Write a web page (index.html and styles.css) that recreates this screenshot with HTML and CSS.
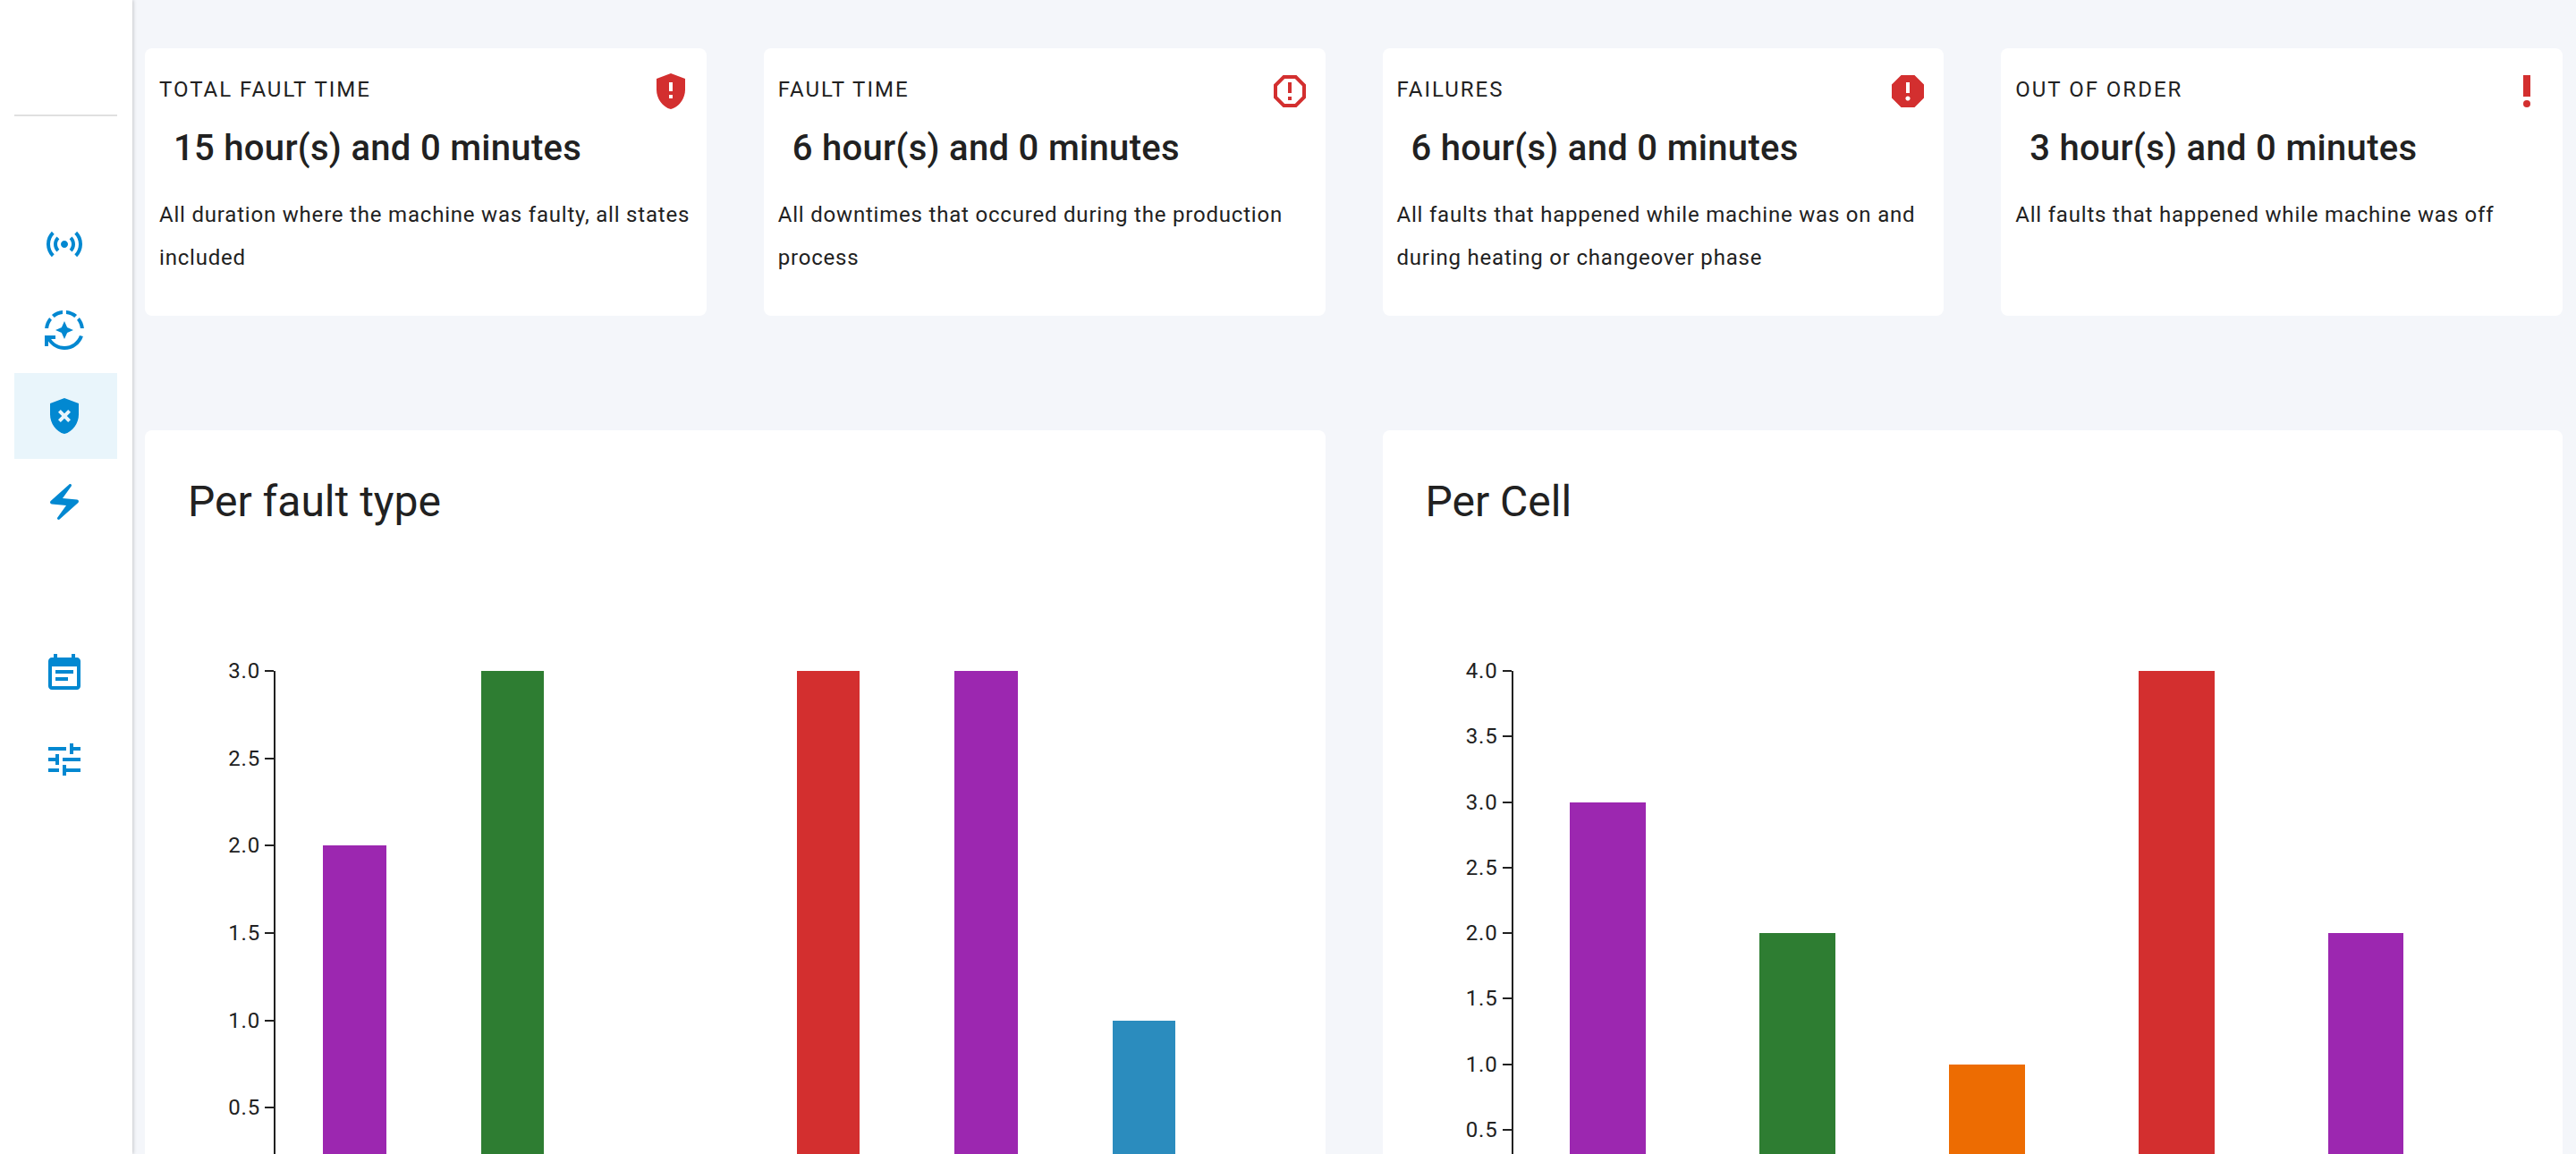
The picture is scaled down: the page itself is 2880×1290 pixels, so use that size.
FILE: index.html
```html
<!DOCTYPE html>
<html lang="en">
<head>
<meta charset="utf-8">
<meta name="viewport" content="width=device-width, initial-scale=1">
<title>Machine faults</title>
<link rel="stylesheet" href="styles.css">
</head>
<body>
<div class="app">
  <nav class="sidebar" aria-label="Main">
    <hr class="divider">
    <div class="nav-group">
      <a class="nav-item" href="#live" aria-label="Live"><svg class="icon" viewBox="0 0 24 24"><path d="M7.76 16.24C6.67 15.16 6 13.66 6 12s.67-3.16 1.76-4.24l1.42 1.42C8.45 9.9 8 10.9 8 12c0 1.1.45 2.1 1.17 2.83l-1.41 1.41zm8.48 0C17.33 15.16 18 13.66 18 12s-.67-3.16-1.76-4.24l-1.42 1.42C15.55 9.9 16 10.9 16 12c0 1.1-.45 2.1-1.17 2.83l1.41 1.41zM12 10c-1.1 0-2 .9-2 2s.9 2 2 2 2-.9 2-2-.9-2-2-2zm8 2c0 2.21-.9 4.21-2.35 5.65l1.42 1.42C20.88 17.26 22 14.76 22 12s-1.12-5.26-2.93-7.07l-1.42 1.42C19.1 7.79 20 9.79 20 12zM6.35 6.35 4.93 4.93C3.12 6.74 2 9.24 2 12s1.12 5.26 2.93 7.07l1.42-1.42C4.9 16.21 4 14.21 4 12s.9-4.21 2.35-5.65z"/></svg></a>
      <a class="nav-item" href="#cycles" aria-label="Cycles"><svg class="icon" viewBox="0 0 24 24"><path d="M19.03 3.56c-1.67-1.39-3.74-2.3-6.03-2.51v2.01c1.73.19 3.31.88 4.61 1.92l1.42-1.42zM11 3.06V1.05c-2.29.2-4.36 1.12-6.03 2.51l1.42 1.42C7.69 3.94 9.27 3.25 11 3.06zM4.98 6.39 3.56 4.97C2.17 6.64 1.26 8.71 1.05 11h2.01c.19-1.73.88-3.31 1.92-4.61zM20.94 11h2.01c-.21-2.29-1.12-4.36-2.51-6.03l-1.42 1.42c1.04 1.3 1.73 2.88 1.92 4.61zM7 12l3.44 1.56L12 17l1.56-3.44L17 12l-3.44-1.56L12 7l-1.56 3.44z"/><path d="M12 21c-3.11 0-5.85-1.59-7.46-4H7v-2H1v6h2v-2.7c1.99 2.84 5.27 4.7 9 4.7 4.87 0 9-3.17 10.44-7.56l-1.96-.45C19.25 18.48 15.92 21 12 21z"/></svg></a>
      <a class="nav-item active" href="#faults" aria-label="Faults" aria-current="page"><svg class="icon" viewBox="0 0 24 24"><path d="M12 2 4 5v6.09c0 5.05 3.41 9.76 8 10.91 4.59-1.15 8-5.86 8-10.91V5l-8-3zm3.5 12.09-1.41 1.41L12 13.42 9.91 15.5 8.5 14.09 10.59 12 8.5 9.91 9.91 8.5 12 10.59l2.09-2.09 1.41 1.41L13.42 12l2.08 2.09z"/></svg></a>
      <a class="nav-item" href="#energy" aria-label="Energy"><svg class="icon" viewBox="0 0 24 24"><path d="M14.69 2.21 4.33 11.49c-.64.58-.28 1.65.58 1.73L13 14l-4.85 6.76c-.22.31-.19.74.08 1.01.3.3.77.31 1.08.02l10.36-9.28c.64-.58.28-1.65-.58-1.73L11 10l4.85-6.76c.22-.31.19-.74-.08-1.01-.3-.3-.77-.31-1.08-.02z"/></svg></a>
    </div>
    <div class="nav-group">
      <a class="nav-item" href="#planning" aria-label="Planning"><svg class="icon" viewBox="0 0 24 24"><path d="M17 10H7v2h10v-2zm2-7h-1V1h-2v2H8V1H6v2H5c-1.11 0-1.99.9-1.99 2L3 19c0 1.1.89 2 2 2h14c1.1 0 2-.9 2-2V5c0-1.1-.9-2-2-2zm0 16H5V8h14v11zm-5-5H7v2h7v-2z"/></svg></a>
      <a class="nav-item" href="#settings" aria-label="Settings"><svg class="icon" viewBox="0 0 24 24"><path d="M3 17v2h6v-2H3zM3 5v2h10V5H3zm10 16v-2h8v-2h-8v-2h-2v6h2zM7 9v2H3v2h4v2h2V9H7zm14 4v-2H11v2h10zm-6-4h2V7h4V5h-4V3h-2v6z"/></svg></a>
    </div>
  </nav>

  <main class="content">
    <section class="stats">
      <article class="stat">
        <header class="stat-head">
          <h2 class="stat-title">TOTAL FAULT TIME</h2>
          <svg class="icon alert" viewBox="0 0 24 24"><path d="M12 2 4 5v6.09c0 5.05 3.41 9.76 8 10.91 4.59-1.15 8-5.86 8-10.91V5l-8-3zm1 14h-2v-2h2v2zm0-4h-2V7h2v5z"/></svg>
        </header>
        <p class="stat-value">15 hour(s) and 0 minutes</p>
        <p class="stat-text">All duration where the machine was faulty, all states included</p>
      </article>
      <article class="stat">
        <header class="stat-head">
          <h2 class="stat-title">FAULT TIME</h2>
          <svg class="icon alert" viewBox="0 0 24 24"><path d="M15.73 3H8.27L3 8.27v7.46L8.27 21h7.46L21 15.73V8.27L15.73 3zM19 14.9 14.9 19H9.1L5 14.9V9.1L9.1 5h5.8L19 9.1v5.8zM11 7h2v6h-2zM11 15h2v2h-2z"/></svg>
        </header>
        <p class="stat-value">6 hour(s) and 0 minutes</p>
        <p class="stat-text">All downtimes that occured during the production process</p>
      </article>
      <article class="stat">
        <header class="stat-head">
          <h2 class="stat-title">FAILURES</h2>
          <svg class="icon alert" viewBox="0 0 24 24"><path d="M15.73 3H8.27L3 8.27v7.46L8.27 21h7.46L21 15.73V8.27L15.73 3zM12 17.3c-.72 0-1.3-.58-1.3-1.3 0-.72.58-1.3 1.3-1.3.72 0 1.3.58 1.3 1.3 0 .72-.58 1.3-1.3 1.3zm1-4.3h-2V7h2v6z"/></svg>
        </header>
        <p class="stat-value">6 hour(s) and 0 minutes</p>
        <p class="stat-text">All faults that happened while machine was on and during heating or changeover phase</p>
      </article>
      <article class="stat">
        <header class="stat-head">
          <h2 class="stat-title">OUT OF ORDER</h2>
          <svg class="icon alert" viewBox="0 0 24 24"><circle cx="12" cy="19" r="2"/><path d="M10 3h4v12h-4z"/></svg>
        </header>
        <p class="stat-value">3 hour(s) and 0 minutes</p>
        <p class="stat-text">All faults that happened while machine was off</p>
      </article>
    </section>

    <section class="panels">
      <article class="panel">
        <h2 class="panel-title">Per fault type</h2>
        <div class="chart">
          <ol class="axis">
            <li class="tick">3.0</li>
            <li class="tick">2.5</li>
            <li class="tick">2.0</li>
            <li class="tick">1.5</li>
            <li class="tick">1.0</li>
            <li class="tick">0.5</li>
            <li class="tick"></li>
          </ol>
          <div class="plot">
            <div class="band"><div class="bar purple" style="height: 66.67%"></div></div>
            <div class="band"><div class="bar green" style="height: 100%"></div></div>
            <div class="band"><div class="bar orange" style="height: 0%"></div></div>
            <div class="band"><div class="bar red" style="height: 100%"></div></div>
            <div class="band"><div class="bar purple" style="height: 100%"></div></div>
            <div class="band"><div class="bar blue" style="height: 33.33%"></div></div>
          </div>
        </div>
      </article>
      <article class="panel">
        <h2 class="panel-title">Per Cell</h2>
        <div class="chart">
          <ol class="axis">
            <li class="tick">4.0</li>
            <li class="tick">3.5</li>
            <li class="tick">3.0</li>
            <li class="tick">2.5</li>
            <li class="tick">2.0</li>
            <li class="tick">1.5</li>
            <li class="tick">1.0</li>
            <li class="tick">0.5</li>
            <li class="tick"></li>
          </ol>
          <div class="plot">
            <div class="band"><div class="bar purple" style="height: 75%"></div></div>
            <div class="band"><div class="bar green" style="height: 50%"></div></div>
            <div class="band"><div class="bar orange" style="height: 25%"></div></div>
            <div class="band"><div class="bar red" style="height: 100%"></div></div>
            <div class="band"><div class="bar purple" style="height: 50%"></div></div>
          </div>
        </div>
      </article>
    </section>
  </main>
</div>
</body>
</html>
```
FILE: styles.css
```css
* {
  box-sizing: border-box;
}

body,
h2,
p,
ol,
hr {
  margin: 0;
  padding: 0;
}

body {
  background: #f4f6fa;
  color: #212121;
  font-family: Roboto, "Liberation Sans", sans-serif;
  font-size: 24px;
}

.app {
  display: flex;
  height: 100vh;
}

/* Sidebar */
.sidebar {
  flex: none;
  z-index: 1;
  width: 148px;
  padding: 128px 17px 0 16px;
  background: #fff;
  box-shadow: 1px 0 4px rgba(0, 0, 0, 0.2);
}

.divider {
  height: 2px;
  margin-bottom: 95px;
  border: 0;
  background: #e0e0e0;
}

.nav-group + .nav-group {
  margin-top: 96px;
}

.nav-item {
  display: flex;
  align-items: center;
  height: 96px;
  padding-left: 32px;
  color: #0288d1;
}

.nav-item.active {
  background: #e9f5fb;
}

.icon {
  flex: none;
  width: 48px;
  height: 48px;
  fill: currentColor;
}

.alert {
  color: #d32f2f;
}

/* Content */
.content {
  flex: 1;
  min-width: 0;
  padding: 54px 15px 54px 14px;
  overflow-y: auto;
  scrollbar-width: none;
}

.stats,
.panels {
  display: grid;
  gap: 64px;
}

.stats {
  grid-template-columns: repeat(4, minmax(0, 1fr));
  margin-bottom: 128px;
}

.panels {
  grid-template-columns: repeat(2, minmax(0, 1fr));
}

.stat,
.panel {
  border-radius: 8px;
  background: #fff;
}

.stat {
  padding: 24px 16px 41px;
}

.stat-head {
  display: flex;
  justify-content: space-between;
  align-items: flex-start;
}

.stat-title {
  font-size: 24px;
  font-weight: 400;
  line-height: 44px;
  letter-spacing: 2px;
}

.stat-value {
  padding: 8px 16px 18px;
  font-size: 40px;
  font-weight: 500;
  line-height: 64px;
  letter-spacing: 0.0075em;
}

.stat-text {
  line-height: 48px;
  letter-spacing: 0.03333em;
}

/* Charts */
.panel {
  padding: 48px;
}

.panel-title {
  font-size: 48px;
  font-weight: 400;
  line-height: 64px;
}

.chart {
  display: flex;
  height: 586px;
  margin: 157px 66px 64px 0;
}

.axis {
  display: flex;
  flex-direction: column;
  justify-content: space-between;
  width: 96px;
  list-style: none;
}

.tick {
  display: flex;
  justify-content: flex-end;
  align-items: center;
  gap: 5px;
  height: 0;
  letter-spacing: 0.03333em;
}

.tick::after {
  width: 10px;
  height: 2px;
  background: #212121;
  content: "";
}

.plot {
  display: flex;
  flex: 1;
  border-left: 2px solid #212121;
}

.band {
  display: flex;
  flex: 1;
  justify-content: center;
  align-items: flex-end;
}

.bar {
  width: 40%;
}

.purple {
  background: #9c27b0;
}

.green {
  background: #2e7d32;
}

.orange {
  background: #ed6c02;
}

.red {
  background: #d32f2f;
}

.blue {
  background: #2b8cbe;
}
```
